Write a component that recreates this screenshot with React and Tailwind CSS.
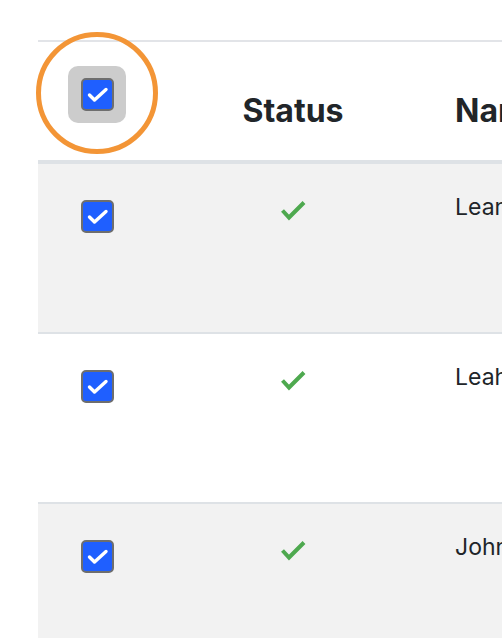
const ROWS = [
  { id: 1, name: 'Leanne Graham', striped: true },
  { id: 2, name: 'Leah Smith', striped: false },
  { id: 3, name: 'John Doe', striped: true },
]

// ─── Checkbox ────────────────────────────────────────────────────────────────

function Checkbox() {
  return (
    <div className="w-[33px] h-[33px] rounded-[5px] border-2 border-[#6e6e6e] bg-[#1f5fff] flex items-center justify-center">
      <svg width="33" height="33" viewBox="0 0 33 33" className="-m-[2px] shrink-0">
        <polyline
          points="8.5,17 13.5,22 25,11.5"
          fill="none"
          stroke="#ffffff"
          strokeWidth="3.4"
          strokeLinecap="round"
          strokeLinejoin="round"
        />
      </svg>
    </div>
  )
}

function StatusCheck() {
  return (
    <svg width="26" height="21" viewBox="0 0 26 21" className="mx-auto">
      <polyline
        points="2.5,10.5 9,17.5 24,2.5"
        fill="none"
        stroke="#4ea94f"
        strokeWidth="4"
        strokeLinejoin="miter"
      />
    </svg>
  )
}

// ─── Table ───────────────────────────────────────────────────────────────────

export default function App() {
  return (
    <div
      className="relative w-[502px] h-[638px] overflow-hidden bg-white text-[#212529]"
      style={{ fontFamily: 'Inter, "Liberation Sans", sans-serif' }}
    >
      <div className="pl-[38px] pt-[40px]">
        <div className="w-[720px] border-t-2 border-[#e2e4e8]">
          {/* header */}
          <div className="flex h-[122px] border-b-4 border-[#dee2e6]">
            <div className="w-[118px] flex justify-center pt-[24px]">
              <div className="w-[58px] h-[57px] rounded-[10px] bg-[#cccccc] flex items-center justify-center">
                <Checkbox />
              </div>
            </div>
            <div className="w-[274px] text-center pt-[50px] text-[32px] leading-[38px] font-bold">
              Status
            </div>
            <div className="flex-1 pl-[25px] pt-[50px] text-[32px] leading-[38px] font-bold whitespace-nowrap">
              Name
            </div>
          </div>

          {/* rows */}
          {ROWS.map(row => (
            <div
              key={row.id}
              className={`flex h-[170px] border-b-2 border-[#dee2e6] ${
                row.striped ? 'bg-[#f2f2f2]' : 'bg-white'
              }`}
            >
              <div className="w-[118px] flex justify-center pt-[36px]">
                <Checkbox />
              </div>
              <div className="w-[274px] pt-[36px]">
                <StatusCheck />
              </div>
              <div className="flex-1 pl-[25px] pt-[27px] text-[23px] leading-[33px] whitespace-nowrap">
                {row.name}
              </div>
            </div>
          ))}
        </div>
      </div>

      {/* highlight ring around the select-all box */}
      <div className="absolute left-[36px] top-[32px] w-[122px] h-[122px] rounded-full border-[5px] border-[#f39536]" />
    </div>
  )
}
